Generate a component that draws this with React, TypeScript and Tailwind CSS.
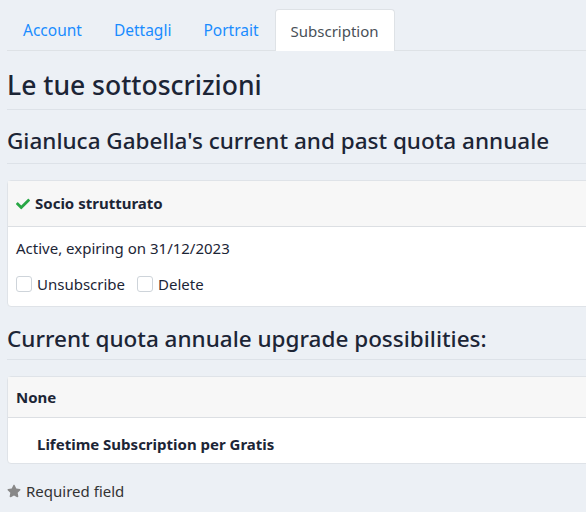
import { FaCheck, FaStar } from "react-icons/fa";

const tabs = ["Account", "Dettagli", "Portrait"];

export default function App() {
  return (
    <div className="min-h-[512px] w-[586px] overflow-hidden bg-[#ecf0f5] pl-[7px] text-[#1c2536] [font-family:'Noto_Sans',sans-serif]">
      <div className="w-[620px]">
        {/* Tabs */}
        <div className="flex pt-[9px] border-b border-[#dee2e6]">
          {tabs.map((t) => (
            <div key={t} className="h-[41px] px-4 pt-[2px] flex items-center text-[15.5px] text-[#1a8cff]">
              {t}
            </div>
          ))}
          <div className="h-[42px] -mb-px px-[15px] pt-[2px] flex items-center text-[15px] text-[#495057] bg-white border border-b-0 border-[#dee2e6] rounded-t-[4px]">
            Subscription
          </div>
        </div>

        <h2 className="mt-[17px] pb-[7px] text-[26.5px] leading-[34px] font-medium border-b border-[#dde2e8]">
          Le tue sottoscrizioni
        </h2>
        <h3 className="mt-4 pb-[7px] text-[22.5px] leading-[30px] font-medium border-b border-[#dde2e8]">
          Gianluca Gabella's current and past quota annuale
        </h3>

        {/* Current subscription card */}
        <div className="mt-4 bg-white border border-[#dfe3e8] rounded-[4px]">
          <div className="h-[46px] px-2 flex items-center gap-[5px] bg-[#f7f7f7] border-b border-[#dcdfe3] text-[15px] font-bold">
            <FaCheck className="text-[#28a745] w-[14px] h-[14px]" />
            Socio strutturato
          </div>
          <div className="px-2 pt-[11px] pb-[12px] text-[15px]">
            <div className="leading-[20px]">Active, expiring on 31/12/2023</div>
            <div className="mt-4 flex items-center leading-[20px]">
              <span className="w-4 h-4 rounded-[3px] border border-[#ced4da] bg-white" />
              <span className="ml-[5px]">Unsubscribe</span>
              <span className="ml-[12px] w-4 h-4 rounded-[3px] border border-[#ced4da] bg-white" />
              <span className="ml-[5px]">Delete</span>
            </div>
          </div>
        </div>

        <h3 className="mt-[17px] pb-[5px] text-[22.5px] leading-[30px] font-medium border-b border-[#dde2e8]">
          Current quota annuale upgrade possibilities:
        </h3>

        {/* Upgrade card */}
        <div className="mt-4 bg-white border border-[#dfe3e8] rounded-[4px]">
          <div className="h-[41px] px-2 flex items-center bg-[#f7f7f7] border-b border-[#dcdfe3] text-[15px] font-bold">
            None
          </div>
          <div className="pl-[29px] pt-4 pb-[9px] leading-[20px] text-[15px] font-bold">
            Lifetime Subscription per Gratis
          </div>
        </div>

        <div className="mt-4 flex items-center gap-[5px] text-[15px] text-[#333]">
          <FaStar className="text-[#888] w-[14px] h-[14px]" />
          Required field
        </div>
      </div>
    </div>
  );
}
